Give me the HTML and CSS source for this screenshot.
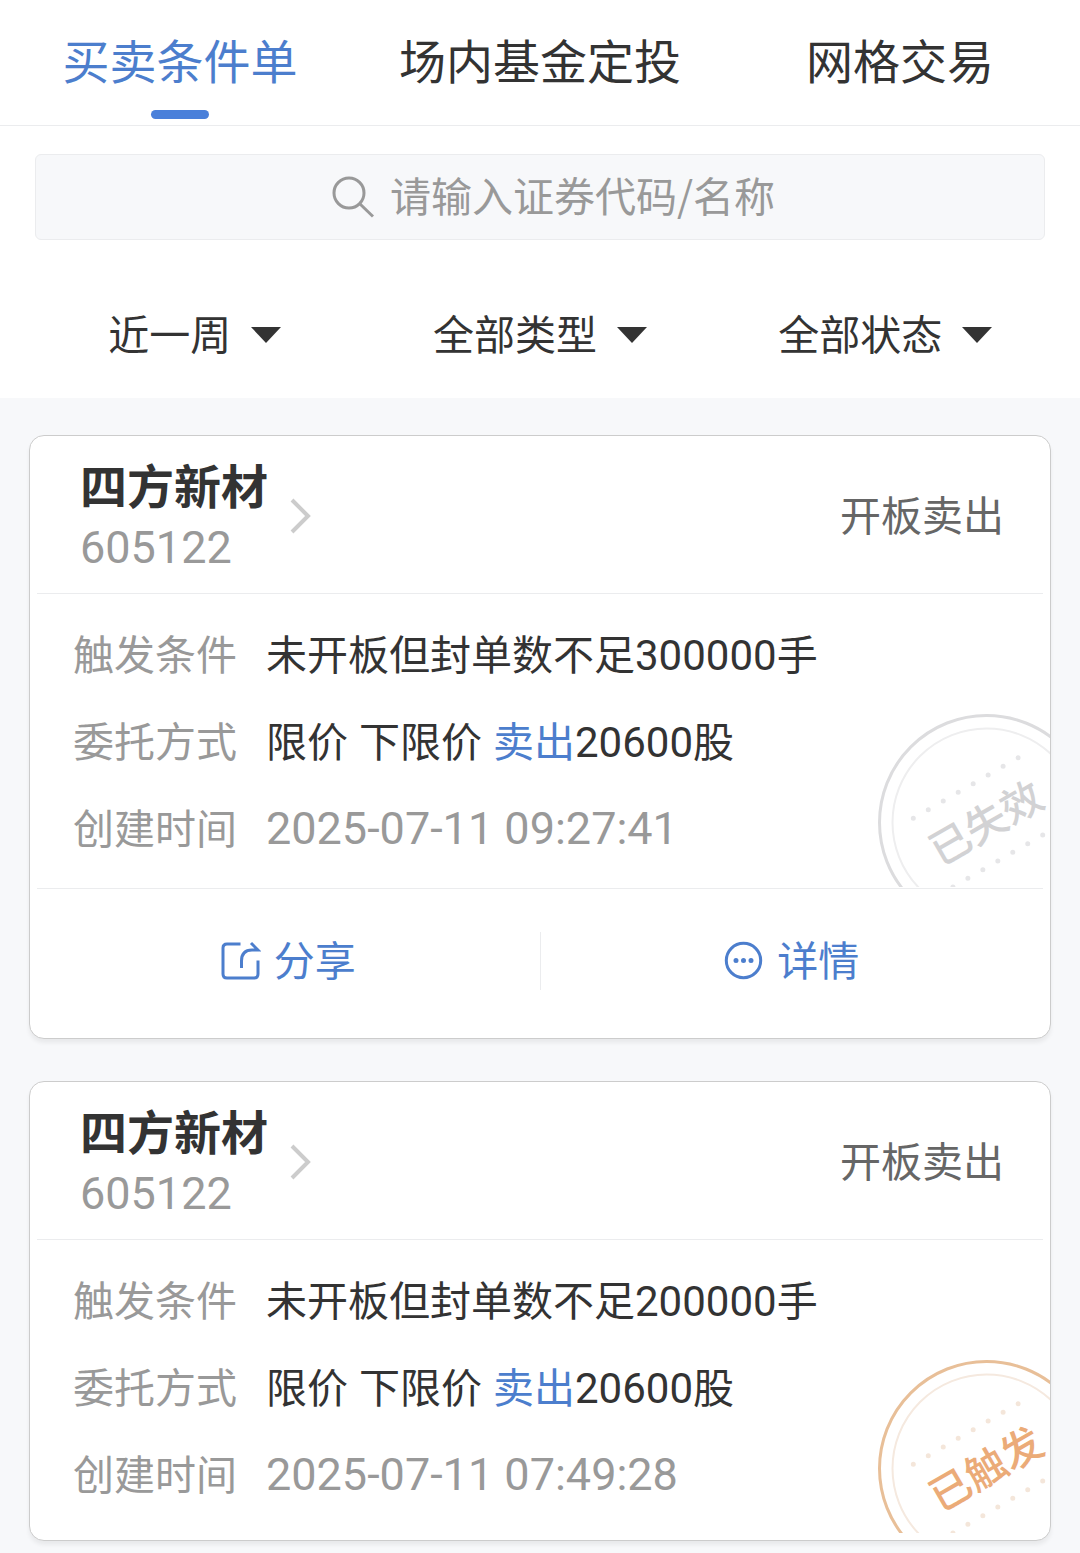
FILE: index.html
```
<!DOCTYPE html>
<html lang="zh-CN">
<head>
<meta charset="utf-8">
<meta name="viewport" content="width=device-width, initial-scale=1">
<title>买卖条件单</title>
<link rel="stylesheet" href="styles.css">
</head>
<body>
<header class="top">
  <nav class="tabs">
    <a class="tab tab-active" href="#orders" aria-current="page">买卖条件单</a>
    <a class="tab" href="#funds">场内基金定投</a>
    <a class="tab" href="#grid">网格交易</a>
  </nav>
  <label class="search">
    <svg class="search-icon" viewBox="0 0 42 42" aria-hidden="true"><circle cx="17" cy="17" r="15"/><path d="M27.500 27.500 41 40.500"/></svg>
    <input class="search-input" type="search" placeholder="请输入证券代码/名称" aria-label="请输入证券代码/名称">
  </label>
  <form class="filters">
    <label class="filter">
      <select class="filter-select" aria-label="时间"><option>近一周</option><option>近一月</option></select>
      <svg class="caret" viewBox="0 0 30 16" aria-hidden="true"><path d="M0 0H30L15 16Z"/></svg>
    </label>
    <label class="filter">
      <select class="filter-select" aria-label="类型"><option>全部类型</option></select>
      <svg class="caret" viewBox="0 0 30 16" aria-hidden="true"><path d="M0 0H30L15 16Z"/></svg>
    </label>
    <label class="filter">
      <select class="filter-select" aria-label="状态"><option>全部状态</option></select>
      <svg class="caret" viewBox="0 0 30 16" aria-hidden="true"><path d="M0 0H30L15 16Z"/></svg>
    </label>
  </form>
</header>

<main class="orders">
  <article class="card">
    <div class="card-head">
      <a class="stock" href="#605122">
        <span class="stock-text">
          <strong class="stock-name">四方新材</strong>
          <span class="stock-code">605122</span>
        </span>
        <svg class="chevron" viewBox="0 0 22 36" aria-hidden="true"><path d="M2 2 18 18 2 34"/></svg>
      </a>
      <span class="kind">开板卖出</span>
    </div>
    <div class="card-body">
      <dl class="facts">
        <div class="fact"><dt>触发条件</dt><dd><span>未开板但封单数不足<span class="num">300000</span>手</span></dd></div>
        <div class="fact"><dt>委托方式</dt><dd><span>限价</span><span>下限价</span><span><span class="sell">卖出</span><span class="num">20600</span>股</span></dd></div>
        <div class="fact"><dt>创建时间</dt><dd><time class="time">2025-07-11 09:27:41</time></dd></div>
      </dl>
      <svg class="stamp stamp-expired" viewBox="0 0 172 173">
        <svg width="172" height="173">
          <circle class="ring" cx="108.500" cy="108.500" r="107"/>
          <circle class="ring-inner" cx="108.500" cy="108.500" r="94"/>
          <path class="dots" d="M35.300 104.300 147 39.700"/>
          <path class="dots" d="M164.700 121 72 174.700"/>
        </svg>
        <text class="stamp-text" x="108" y="124" transform="rotate(-30 108 109)">已失效</text>
      </svg>
    </div>
    <div class="actions">
      <button class="action" type="button">
        <svg class="action-icon" viewBox="0 0 40 40" aria-hidden="true"><path d="M19.500 3H6Q2 3 2 7V33Q2 37 6 37H33Q37 37 37 33V19.500M20.500 27V20Q20.500 9 31 9H37L30 2"/></svg>
        <span class="action-text">分享</span>
      </button>
      <button class="action" type="button">
        <svg class="action-icon" viewBox="0 0 40 40" aria-hidden="true"><circle cx="19.500" cy="19.500" r="17.200"/><path class="fill" d="M9.500 19.500a2.500 2.500 0 1 0 5 0a2.500 2.500 0 1 0-5 0M17 19.500a2.500 2.500 0 1 0 5 0a2.500 2.500 0 1 0-5 0M24.500 19.500a2.500 2.500 0 1 0 5 0a2.500 2.500 0 1 0-5 0"/></svg>
        <span class="action-text">详情</span>
      </button>
    </div>
  </article>

  <article class="card">
    <div class="card-head">
      <a class="stock" href="#605122">
        <span class="stock-text">
          <strong class="stock-name">四方新材</strong>
          <span class="stock-code">605122</span>
        </span>
        <svg class="chevron" viewBox="0 0 22 36" aria-hidden="true"><path d="M2 2 18 18 2 34"/></svg>
      </a>
      <span class="kind">开板卖出</span>
    </div>
    <div class="card-body">
      <dl class="facts">
        <div class="fact"><dt>触发条件</dt><dd><span>未开板但封单数不足<span class="num">200000</span>手</span></dd></div>
        <div class="fact"><dt>委托方式</dt><dd><span>限价</span><span>下限价</span><span><span class="sell">卖出</span><span class="num">20600</span>股</span></dd></div>
        <div class="fact"><dt>创建时间</dt><dd><time class="time">2025-07-11 07:49:28</time></dd></div>
      </dl>
      <svg class="stamp stamp-fired" viewBox="0 0 172 173">
        <svg width="172" height="173">
          <circle class="ring" cx="108.500" cy="108.500" r="107"/>
          <circle class="ring-inner" cx="108.500" cy="108.500" r="94"/>
          <path class="dots" d="M35.300 104.300 147 39.700"/>
          <path class="dots" d="M164.700 121 72 174.700"/>
        </svg>
        <text class="stamp-text" x="108" y="124" transform="rotate(-30 108 109)">已触发</text>
      </svg>
    </div>
  </article>
</main>
</body>
</html>
```
FILE: styles.css
```
:root {
  --blue: #4c7ecd;
  --ink: #333;
  --muted: #999;
  --line: #ebecee;
  --page: #f7f8fa;
  --cjk: "Noto Sans CJK SC", sans-serif;
  --digits: Roboto, "Noto Sans CJK SC", sans-serif;
}

* { box-sizing: border-box; }

body {
  margin: 0;
  background: var(--page);
  color: var(--ink);
  font: 41px/60px var(--cjk);
}

a { color: inherit; text-decoration: none; }

svg { display: block; flex: none; fill: none; }

.top { background: #fff; }

.tabs {
  display: flex;
  border-bottom: 1px solid var(--line);
}

.tab {
  flex: 1;
  display: flex;
  flex-direction: column;
  align-items: center;
  padding: 27px 0 6px;
  font-size: 47px;
  line-height: 64px;
  white-space: nowrap;
}

.tab::after {
  content: "";
  width: 58px;
  height: 9px;
  margin-top: 19px;
  border-radius: 5px;
}

.tab-active { color: var(--blue); }
.tab-active::after { background: #4a80da; }

.search {
  display: flex;
  align-items: center;
  justify-content: center;
  gap: 16px;
  height: 86px;
  margin: 28px 35px 0;
  padding-left: 28px;
  border: 1px solid var(--line);
  border-radius: 6px;
  background: var(--page);
}

.search-icon {
  width: 42px;
  height: 42px;
  stroke: var(--muted);
  stroke-width: 3;
}

.search-input {
  width: 386px;
  height: 66px;
  padding: 0 0 6px;
  border: 0;
  outline: 0;
  background: none;
  color: var(--ink);
  font: inherit;
  appearance: none;
}

.search-input::placeholder { color: var(--muted); opacity: 1; }
.search-input::-webkit-search-cancel-button { display: none; }

.filters {
  display: flex;
  padding: 62px 22px 30px;
}

.filter {
  flex: 1;
  display: flex;
  align-items: center;
  justify-content: center;
}

.filter-select {
  height: 66px;
  padding: 0 50px 6px 0;
  border: 0;
  background: none;
  color: inherit;
  font: inherit;
  appearance: none;
}

.caret {
  width: 30px;
  height: 16px;
  margin-left: -30px;
  fill: var(--ink);
  pointer-events: none;
}

.orders {
  display: grid;
  gap: 42px;
  padding: 37px 29px 12px;
}

.card {
  padding-bottom: 6px;
  border: 1px solid #ccc;
  border-radius: 15px;
  background: #fff;
  box-shadow: 0 4px 4px rgba(0, 0, 0, 0.06);
}

.card-head {
  display: flex;
  align-items: center;
  justify-content: space-between;
  margin: 0 7px;
  padding: 17px 39px 15px 43px;
  border-bottom: 1px solid var(--line);
}

.stock {
  display: flex;
  align-items: center;
  gap: 22px;
}

.stock-text {
  display: flex;
  flex-direction: column;
  gap: 3px;
}

.stock-name {
  font-size: 47px;
  line-height: 62px;
}

.stock-code {
  color: var(--muted);
  font-family: var(--digits);
  font-size: 45px;
}

.chevron {
  width: 22px;
  height: 36px;
  stroke: #ccc;
  stroke-width: 4;
}

.kind {
  padding-bottom: 6px;
  color: #666;
}

.card-body {
  position: relative;
  padding: 18px 43px 15px;
}

.facts { margin: 0; }

.fact {
  display: flex;
  align-items: baseline;
  gap: 29px;
  height: 87px;
  padding-top: 10px;
}

.fact dt { color: var(--muted); }

.fact dd {
  display: flex;
  gap: 11px;
  margin: 0;
}

.num {
  font-family: var(--digits);
  font-size: 42px;
  line-height: 1;
}

.sell { color: var(--blue); }

.time {
  color: var(--muted);
  font-family: var(--digits);
  font-size: 45px;
}

.stamp {
  position: absolute;
  right: 0;
  bottom: 1px;
  width: 172px;
  height: 173px;
  overflow: visible;
}

.ring { stroke-width: 3; }
.ring-inner { stroke-width: 2; }

.dots {
  stroke-width: 5;
  stroke-linecap: round;
  stroke-dasharray: 0 17.290;
}

.stamp-text {
  font-size: 41px;
  font-weight: 500;
  text-anchor: middle;
}

.stamp-expired .ring { stroke: #dcdcde; }
.stamp-expired .ring-inner { stroke: #eeeeef; }
.stamp-expired .dots { stroke: #e6e6e8; }
.stamp-expired .stamp-text { fill: #d2d2d4; }

.stamp-fired .ring { stroke: #e8bf98; }
.stamp-fired .ring-inner { stroke: #f5e9df; }
.stamp-fired .dots { stroke: #f4e6da; }
.stamp-fired .stamp-text { fill: #ebab78; }

.actions {
  display: flex;
  margin: 0 7px;
  padding: 43px 0 42px;
  border-top: 1px solid var(--line);
}

.action {
  flex: 1;
  display: flex;
  align-items: center;
  justify-content: center;
  gap: 13px;
  height: 58px;
  padding: 0;
  border: 0;
  background: none;
  color: var(--blue);
  font: inherit;
}

.action + .action { border-left: 1px solid var(--line); }

.action-icon {
  width: 40px;
  height: 40px;
  stroke: currentColor;
  stroke-width: 3;
}

.action-text { padding-bottom: 6px; }

.fill { fill: currentColor; stroke: none; }
```
